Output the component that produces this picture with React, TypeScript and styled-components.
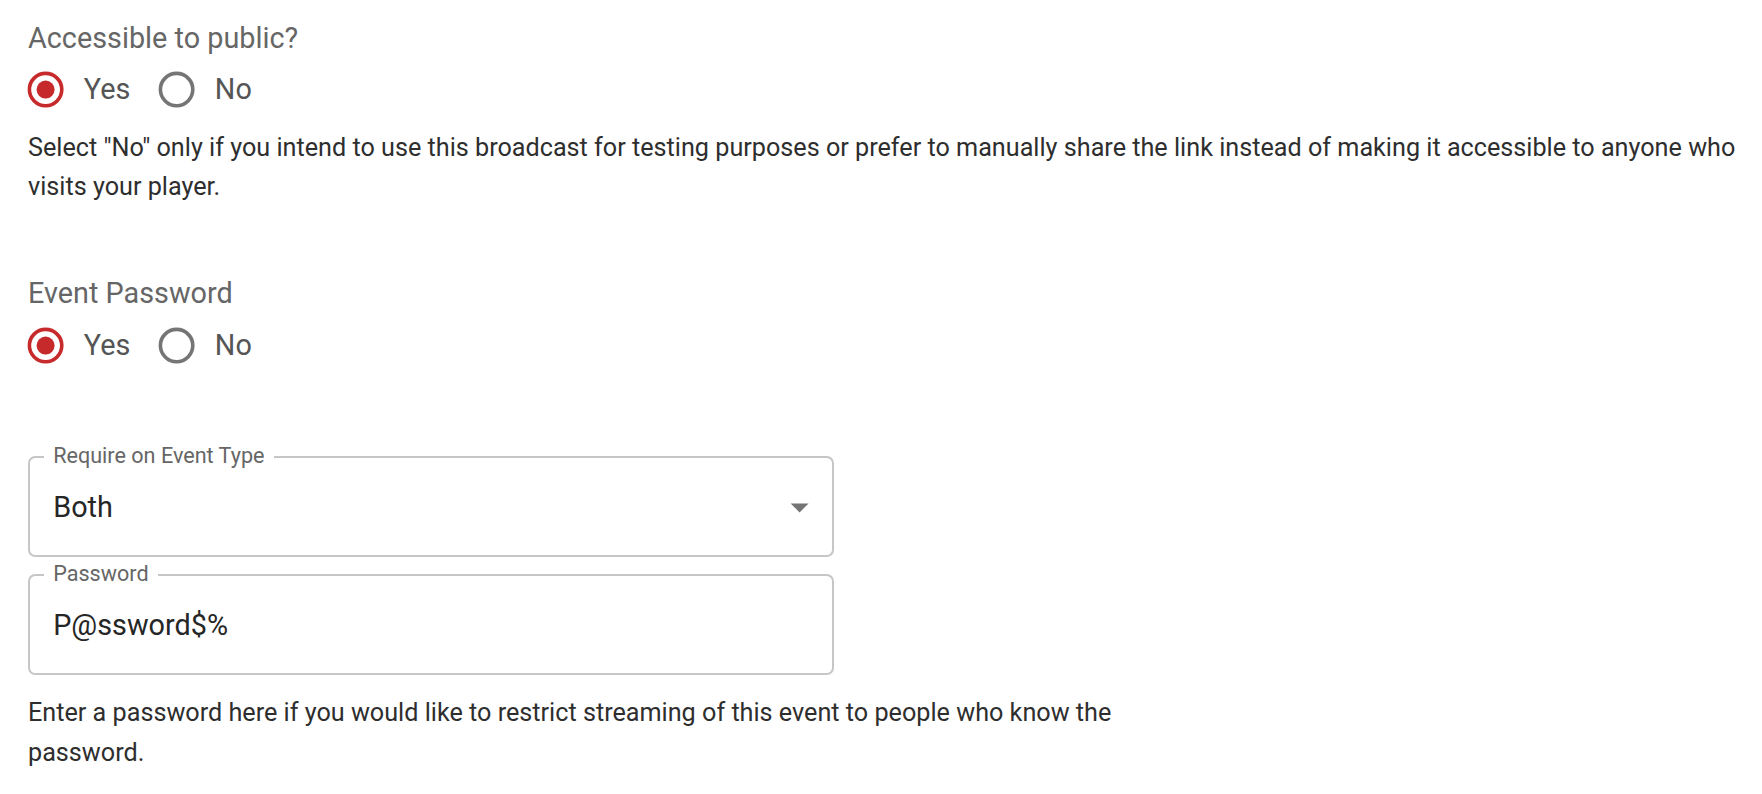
import React from "react";
import styled, { createGlobalStyle } from "styled-components";

const Global = createGlobalStyle`
  html, body { margin: 0; padding: 0; background: #ffffff; }
  body { font-family: Roboto, "Noto Sans", "Liberation Sans", sans-serif; }
  * { box-sizing: border-box; }
`;

const Page = styled.div`
  padding: 17.5px 16px 0 28px;
  display: flex;
  flex-direction: column;
`;

const GroupLabel = styled.div<{ $gap?: number }>`
  font-size: 28.8px;
  line-height: 40px;
  color: #666666;
  margin-top: ${(p) => p.$gap ?? 0}px;
`;

const RadioRow = styled.div`
  display: flex;
  align-items: center;
  height: 64px;
`;

const RadioOption = styled.label`
  display: inline-flex;
  align-items: center;
  height: 64px;
  margin-left: -19.8px;
  margin-right: 28.8px;
  cursor: pointer;
`;

const RadioIconBox = styled.span`
  display: inline-flex;
  padding: 0 16.2px;
`;

const OptionText = styled.span`
  font-size: 28.8px;
  line-height: 1.5;
  color: #555555;
`;

const Helper = styled.p<{ $gap?: number; $max?: number }>`
  margin: ${(p) => p.$gap ?? 0}px 0 0 0;
  font-size: 25.2px;
  line-height: 39.2px;
  color: #2e2e2e;
  max-width: ${(p) => (p.$max ? `${p.$max}px` : "none")};
`;

const Fields = styled.div`
  display: flex;
  flex-direction: column;
  gap: 17px;
  margin-top: 79px;
`;

const Field = styled.div`
  position: relative;
  width: 806px;
  height: 101px;
  border: 2px solid #c6c6c6;
  border-radius: 7.2px;
  display: flex;
  align-items: center;
  padding-left: 23.2px;
`;

const FieldLabel = styled.span`
  position: absolute;
  left: 14.2px;
  top: -13px;
  padding: 0 9px;
  background: #ffffff;
  font-size: 21.6px;
  line-height: 21.6px;
  color: #666666;
  white-space: nowrap;
`;

const FieldValue = styled.span`
  font-size: 28.8px;
  line-height: 1.4;
  color: #262626;
`;

const ArrowIcon = styled.svg`
  position: absolute;
  right: 10.6px;
  top: 50%;
  transform: translateY(-50%);
  width: 43.2px;
  height: 43.2px;
  fill: #757575;
`;

const RadioSvg = ({ checked }: { checked: boolean }) => (
  <svg width="43.2" height="43.2" viewBox="0 0 24 24">
    <circle
      cx="12"
      cy="12"
      r="9"
      fill="none"
      stroke={checked ? "#c62a2a" : "#757575"}
      strokeWidth="2"
    />
    {checked && <circle cx="12" cy="12" r="5" fill="#c62a2a" />}
  </svg>
);

const YesNo = ({ value }: { value: "yes" | "no" }) => (
  <RadioRow>
    <RadioOption>
      <RadioIconBox>
        <RadioSvg checked={value === "yes"} />
      </RadioIconBox>
      <OptionText>Yes</OptionText>
    </RadioOption>
    <RadioOption>
      <RadioIconBox>
        <RadioSvg checked={value === "no"} />
      </RadioIconBox>
      <OptionText>No</OptionText>
    </RadioOption>
  </RadioRow>
);

export default function App() {
  return (
    <>
      <Global />
      <Page>
        <GroupLabel>Accessible to public?</GroupLabel>
        <YesNo value="yes" />
        <Helper $gap={6}>
          Select "No" only if you intend to use this broadcast for testing purposes or prefer to
          manually share the link instead of making it accessible to anyone who visits your player.
        </Helper>

        <GroupLabel $gap={67.5}>Event Password</GroupLabel>
        <YesNo value="yes" />

        <Fields>
          <Field>
            <FieldLabel>Require on Event Type</FieldLabel>
            <FieldValue>Both</FieldValue>
            <ArrowIcon viewBox="0 0 24 24">
              <path d="M7 10l5 5 5-5z" />
            </ArrowIcon>
          </Field>
          <Field>
            <FieldLabel>Password</FieldLabel>
            <FieldValue>P@ssword$%</FieldValue>
          </Field>
        </Fields>

        <Helper $gap={18} $max={1120}>
          Enter a password here if you would like to restrict streaming of this event to people who
          know the password.
        </Helper>
      </Page>
    </>
  );
}
